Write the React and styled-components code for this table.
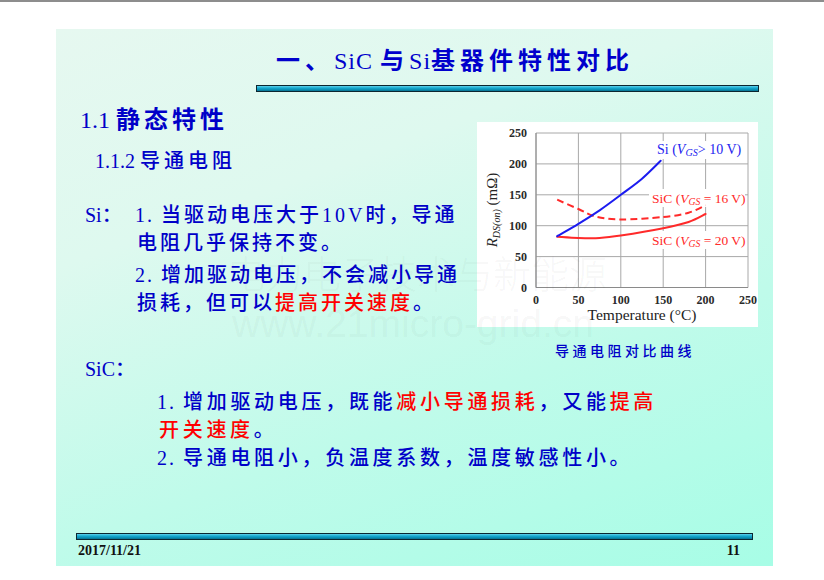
import React from "react";
import styled, { createGlobalStyle } from "styled-components";

const FONT = `"Liberation Serif", "Noto Sans CJK SC", serif`;
const BLUE = "#0000c8";
const RED = "#ff0000";

const Global = createGlobalStyle`
  html, body { margin: 0; padding: 0; background: #ffffff; }
  body { width: 824px; height: 580px; overflow: hidden; font-family: ${FONT}; }
`;

const Page = styled.div`
  width: 824px;
  height: 580px;
  box-sizing: border-box;
  border-top: 2px solid #8d8d8d;
  padding: 27px 0 0 56px;
`;

const Slide = styled.div`
  position: relative;
  width: 717px;
  height: 537px;
  box-sizing: border-box;
  padding-bottom: 7px;
  display: flex;
  flex-direction: column;
  background: linear-gradient(160deg, #e6f8f0 0%, #def9ef 30%, #bffbea 65%, #a7fde6 100%);
  color: ${BLUE};
  font-family: ${FONT};
  overflow: hidden;
`;

const Title = styled.h1`
  margin: 0;
  height: 56px;
  box-sizing: border-box;
  padding-left: 220px;
  font-size: 24px;
  line-height: 64px;
  letter-spacing: 5px;
  font-weight: 700;
  color: #0000cc;
  white-space: nowrap;
`;

const Num = styled.span`
  font-weight: 400;
  letter-spacing: ${(p) => (p.$ls ?? 0)}px;
`;

const Red = styled.span`
  color: ${RED};
`;

const Bar = styled.div`
  box-sizing: border-box;
  height: 7px;
  margin: 0 ${(p) => p.$right}px 0 ${(p) => p.$left}px;
  border: 1px solid #0b2630;
  background: linear-gradient(#5fd0ea 0%, #15aad0 40%, #0a8db2 75%, #086f8c 100%);
`;

const Body = styled.div`
  display: grid;
  grid-template-columns: 421px 281px;
  align-items: start;
`;

const LeftCol = styled.div`
  display: flex;
  flex-direction: column;
`;

const Heading = styled.div`
  margin-top: 13px;
  padding-left: ${(p) => p.$indent}px;
  font-size: ${(p) => p.$size}px;
  line-height: ${(p) => p.$lh}px;
  letter-spacing: 4px;
  font-weight: ${(p) => p.$weight};
  white-space: nowrap;
`;

const PointBlock = styled.div`
  display: grid;
  grid-template-columns: ${(p) => p.$labelWidth}px 1fr;
  margin-top: ${(p) => p.$top}px;
  padding-left: 29px;
`;

const Label = styled.div`
  font-size: 20px;
  line-height: ${(p) => p.$lh}px;
  font-weight: 500;
`;

const Items = styled.div`
  display: flex;
  flex-direction: column;
  gap: ${(p) => p.$gap}px;
`;

const Item = styled.div`
  display: flex;
  flex-direction: column;
`;

const Line = styled.div`
  padding-left: ${(p) => p.$indent || 0}px;
  font-size: 20px;
  line-height: 28px;
  letter-spacing: ${(p) => p.$ls}px;
  font-weight: 500;
  white-space: nowrap;
`;

const RightCol = styled.div`
  display: flex;
  flex-direction: column;
`;

const ChartBox = styled.div`
  margin-top: 30px;
  width: 281px;
  height: 205px;
  background: #ffffff;
`;

const Caption = styled.div`
  margin-top: 18px;
  padding-left: 78px;
  font-size: 14px;
  line-height: 14px;
  letter-spacing: 3.5px;
  font-weight: 500;
  white-space: nowrap;
`;

const SicSection = styled.div`
  display: flex;
  flex-direction: column;
  padding-left: 29px;
`;

const SicList = styled.div`
  margin-top: 9px;
  padding-left: 72px;
  display: flex;
  flex-direction: column;
`;

const Footer = styled.div`
  margin-top: auto;
  display: flex;
  flex-direction: column;
`;

const FooterRow = styled.div`
  margin-top: 3px;
  height: 16px;
  padding: 0 33px 0 22px;
  display: flex;
  justify-content: space-between;
  align-items: center;
  font-size: 14px;
  line-height: 16px;
  font-weight: 700;
  color: #111111;
`;

const Watermark = styled.div`
  position: absolute;
  left: ${(p) => p.$x}px;
  top: ${(p) => p.$y}px;
  font-family: ${(p) => p.$font};
  font-size: ${(p) => p.$size}px;
  line-height: ${(p) => p.$size}px;
  font-weight: 300;
  color: rgba(60, 60, 60, 0.055);
  white-space: nowrap;
  pointer-events: none;
`;

/* ---------- chart ---------- */
const X = (t) => 59 + t * 0.848;
const Y = (v) => 165.5 - v * 0.618;

function smooth(points) {
  const p = points.map(([t, v]) => [X(t), Y(v)]);
  let d = `M${p[0][0].toFixed(1)},${p[0][1].toFixed(1)}`;
  for (let i = 0; i < p.length - 1; i++) {
    const p0 = p[i - 1] || p[i];
    const p1 = p[i];
    const p2 = p[i + 1];
    const p3 = p[i + 2] || p2;
    const c1x = p1[0] + (p2[0] - p0[0]) / 6;
    const c1y = p1[1] + (p2[1] - p0[1]) / 6;
    const c2x = p2[0] - (p3[0] - p1[0]) / 6;
    const c2y = p2[1] - (p3[1] - p1[1]) / 6;
    d += ` C${c1x.toFixed(1)},${c1y.toFixed(1)} ${c2x.toFixed(1)},${c2y.toFixed(1)} ${p2[0].toFixed(1)},${p2[1].toFixed(1)}`;
  }
  return d;
}

const SI = [[25, 83], [50, 103], [75, 125], [100, 150], [125, 176], [147, 205]];
const SIC16 = [[25, 142], [50, 127], [70, 115], [100, 110], [150, 114], [180, 121], [200, 133]];
const SIC20 = [[25, 82], [50, 80], [75, 80], [100, 84], [150, 96], [180, 106], [200, 119]];
const TICKS = [0, 50, 100, 150, 200, 250];
const SVG_FONT = `"Liberation Serif", serif`;

function CurveLabel({ x, y, color, pre, post, size = 13.5 }) {
  return (
    <text x={x} y={y} fill={color} fontSize={size} fontFamily={SVG_FONT}>
      {pre}
      <tspan fontStyle="italic">V</tspan>
      <tspan fontStyle="italic" fontSize={size * 0.72} dy="2">GS</tspan>
      <tspan dy="-2">{post}</tspan>
    </text>
  );
}

function Chart() {
  return (
    <svg width="281" height="205" viewBox="0 0 281 205">
      {TICKS.map((t) => (
        <line key={"v" + t} x1={X(t)} y1={Y(0)} x2={X(t)} y2={Y(250)} stroke="#a8a8a8" strokeWidth="1" />
      ))}
      {TICKS.map((v) => (
        <line key={"h" + v} x1={X(0)} y1={Y(v)} x2={X(250)} y2={Y(v)} stroke="#a8a8a8" strokeWidth="1" />
      ))}
      <line x1={X(0)} y1={Y(0)} x2={X(0)} y2={Y(250)} stroke="#8a8a8a" strokeWidth="1" />
      <line x1={X(0)} y1={Y(0)} x2={X(250)} y2={Y(0)} stroke="#8a8a8a" strokeWidth="1" />
      {TICKS.map((v) => (
        <text key={"yl" + v} x="50" y={Y(v) + 4} textAnchor="end" fontSize="12" fontWeight="700" fill="#2a2a2a" fontFamily={SVG_FONT}>
          {v}
        </text>
      ))}
      {TICKS.map((t) => (
        <text key={"xl" + t} x={X(t)} y="182" textAnchor="middle" fontSize="12" fontWeight="700" fill="#2a2a2a" fontFamily={SVG_FONT}>
          {t}
        </text>
      ))}
      <text x={X(125)} y="198" textAnchor="middle" fontSize="15.5" fill="#222" fontFamily={SVG_FONT}>
        Temperature (°C)
      </text>
      <text transform="translate(20,88) rotate(-90)" textAnchor="middle" fontSize="15" fill="#222" fontFamily={SVG_FONT}>
        <tspan fontStyle="italic">R</tspan>
        <tspan fontStyle="italic" fontSize="10" dy="3">DS(on)</tspan>
        <tspan dy="-3"> (mΩ)</tspan>
      </text>

      <rect x="177" y="19" width="88" height="18" fill="#ffffff" />
      <rect x="172" y="67" width="96" height="18" fill="#ffffff" />
      <rect x="172" y="109" width="96" height="18" fill="#ffffff" />

      <path d={smooth(SIC20)} fill="none" stroke="#ff2a2a" strokeWidth="2" strokeLinecap="round" />
      <path d={smooth(SIC16)} fill="none" stroke="#ff2a2a" strokeWidth="2" strokeDasharray="7 4" />
      <path d={smooth(SI)} fill="none" stroke="#1c1cf0" strokeWidth="2" strokeLinecap="round" />

      <CurveLabel x={180} y={32} color="#2424f0" pre="Si (" post="> 10 V)" size={14} />
      <CurveLabel x={175} y={81} color="#ff2a2a" pre="SiC (" post=" = 16 V)" />
      <CurveLabel x={175} y={123} color="#ff2a2a" pre="SiC (" post=" = 20 V)" />
    </svg>
  );
}

export default function App() {
  return (
    <>
      <Global />
      <Page>
        <Slide>
          <Title>
            一、<Num $ls={1}>SiC </Num>与<Num $ls={1}>Si</Num>基器件特性对比
          </Title>
          <Bar $left={200} $right={14} />

          <Body>
            <LeftCol>
              <Heading $indent={24} $size={24} $lh={30} $weight={600}>
                <Num>1.1 </Num>静态特性
              </Heading>
              <Heading $indent={39} $size={20} $lh={26} $weight={500}>
                <Num>1.1.2 </Num>导通电阻
              </Heading>

              <PointBlock $labelWidth={50} $top={27}>
                <Label $lh={28}>
                  <Num>Si</Num>：
                </Label>
                <Items $gap={4}>
                  <Item>
                    <Line $ls={3}>
                      <Num $ls={2}>1. </Num>当驱动电压大于<Num $ls={3}>10V</Num>时，导通
                    </Line>
                    <Line $ls={3} $indent={2}>电阻几乎保持不变。</Line>
                  </Item>
                  <Item>
                    <Line $ls={3}>
                      <Num $ls={2}>2. </Num>增加驱动电压，不会减小导通
                    </Line>
                    <Line $ls={3} $indent={2}>
                      损耗，但可以<Red>提高开关速度</Red>。
                    </Line>
                  </Item>
                </Items>
              </PointBlock>
            </LeftCol>

            <RightCol>
              <ChartBox>
                <Chart />
              </ChartBox>
              <Caption>导通电阻对比曲线</Caption>
            </RightCol>
          </Body>

          <SicSection>
            <Label $lh={20}>
              <Num>SiC</Num>：
            </Label>
            <SicList>
              <Line $ls={3.7}>
                <Num $ls={2}>1. </Num>增加驱动电压，既能<Red>减小导通损耗</Red>，又能<Red>提高</Red>
              </Line>
              <Line $ls={3.7} $indent={2}>
                <Red>开关速度</Red>。
              </Line>
              <Line $ls={3.7}>
                <Num $ls={2}>2. </Num>导通电阻小，负温度系数，温度敏感性小。
              </Line>
            </SicList>
          </SicSection>

          <Footer>
            <Bar $left={20} $right={20} />
            <FooterRow>
              <span>2017/11/21</span>
              <span>11</span>
            </FooterRow>
          </Footer>

          <Watermark $x={171} $y={224} $size={38} $font={`"Noto Sans CJK SC", sans-serif`}>
            电力电子技术与新能源
          </Watermark>
          <Watermark $x={176} $y={275} $size={39} $font={`"Liberation Sans", sans-serif`}>
            www.21micro-grid.cn
          </Watermark>
        </Slide>
      </Page>
    </>
  );
}
